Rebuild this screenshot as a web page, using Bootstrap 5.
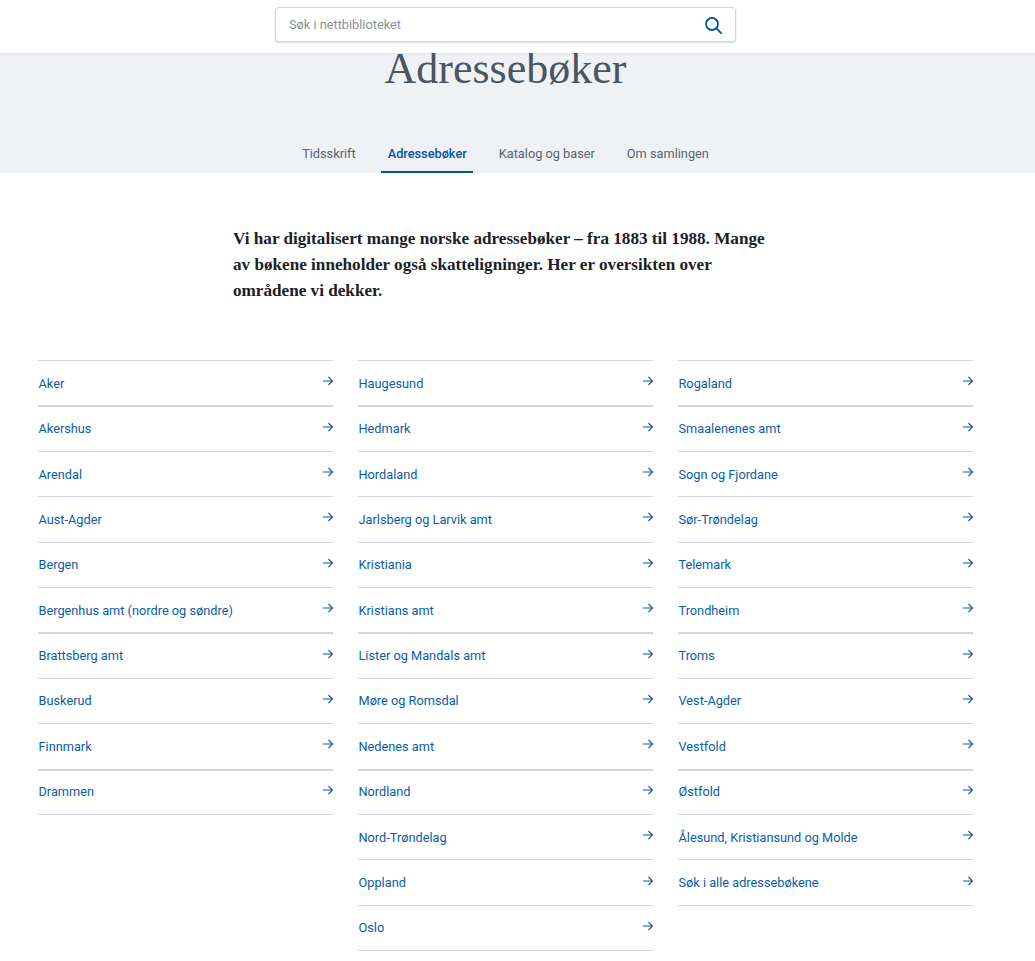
<!DOCTYPE html>
<html lang="no">
<head>
<meta charset="utf-8">
<title>Adressebøker</title>
<link href="https://cdn.jsdelivr.net/npm/bootstrap@5.3.0/dist/css/bootstrap.min.css" rel="stylesheet">
<style>
body{font-family:Roboto,sans-serif;background:#fff;overflow:hidden;}
.top-bar{height:53px;background:#fff;position:relative;z-index:2;box-shadow:0 1px 2px rgba(60,70,90,.08);padding-right:24px;}
.search-box{width:461px;height:35px;border:1px solid #d0d7e0;border-radius:4px;box-shadow:0 1px 2px rgba(40,60,90,.2);padding:0 13px;margin-top:7px;background:#fff;}
.search-box span{font-size:12.75px;color:#8a9096;}
.hero{background:#eff1f5;height:120px;padding-right:24px;}
.hero h1{font-family:"Liberation Serif",serif;font-size:44px;line-height:1;font-weight:400;color:#4a5560;margin:0;margin-top:-6px;text-align:center;}
.tabs{gap:19px;}
.tabs a{display:block;padding:1px 6.5px 0;height:40px;line-height:40px;font-size:12.75px;color:#5a636c;text-decoration:none;}
.tabs a.on{color:#00569f;font-weight:500;border-bottom:2px solid #00569f;}
.intro{width:540px;margin:53px 0 0 233px;font-family:"Liberation Serif",serif;font-weight:700;font-size:17.15px;line-height:26px;color:#1c2126;}
.cols{padding-left:38px;width:973px;gap:25px;margin-top:56px;}
.col-list{width:295px;}
.row-link{height:45.4px;border-top:1px solid #d2d8e2;color:#0a5ca6;font-size:12.75px;text-decoration:none;padding:.2px 0 0 .5px;}
.row-link:last-child{height:46.4px;border-bottom:1px solid #d2d8e2;}
.row-link.heavy{border-top-width:2px;border-top-color:#d0d6e0;padding-bottom:1px;}
.row-link svg{margin-top:-4px;}
</style>
</head>
<body>
<div class="top-bar d-flex justify-content-center">
  <div class="search-box d-flex align-items-center justify-content-between">
    <span>Søk i nettbiblioteket</span>
    <svg width="18" height="18" viewBox="0 0 18 18" fill="none" stroke="#00569f" stroke-width="1.8" stroke-linecap="round"><circle cx="8" cy="8" r="6"/><path d="M12.4 12.4 17 17"/></svg>
  </div>
</div>
<div class="hero d-flex flex-column justify-content-between">
  <h1>Adressebøker</h1>
  <nav class="tabs d-flex justify-content-center">
    <a href="#">Tidsskrift</a>
    <a href="#" class="on">Adressebøker</a>
    <a href="#">Katalog og baser</a>
    <a href="#">Om samlingen</a>
  </nav>
</div>
<p class="intro">Vi har digitalisert mange norske adressebøker – fra 1883 til 1988. Mange av bøkene inneholder også skatteligninger. Her er oversikten over områdene vi dekker.</p>
<svg width="0" height="0" class="position-absolute"><symbol id="arr" viewBox="0 0 10 10"><path d="M0 5h9.5M5.5 1l4 4-4 4" fill="none" stroke="#0a5ca6" stroke-width="1.1"/></symbol></svg>
<div class="cols d-flex align-items-start">
  <div class="col-list d-flex flex-column" id="c1"></div>
  <div class="col-list d-flex flex-column" id="c2"></div>
  <div class="col-list d-flex flex-column" id="c3"></div>
</div>
<script>
const data={c1:["Aker","Akershus","Arendal","Aust-Agder","Bergen","Bergenhus amt (nordre og søndre)","Brattsberg amt","Buskerud","Finnmark","Drammen"],
c2:["Haugesund","Hedmark","Hordaland","Jarlsberg og Larvik amt","Kristiania","Kristians amt","Lister og Mandals amt","Møre og Romsdal","Nedenes amt","Nordland","Nord-Trøndelag","Oppland","Oslo"],
c3:["Rogaland","Smaalenenes amt","Sogn og Fjordane","Sør-Trøndelag","Telemark","Trondheim","Troms","Vest-Agder","Vestfold","Østfold","Ålesund, Kristiansund og Molde","Søk i alle adressebøkene"]};
const heavy=[1,6,9];
for(const k in data){document.getElementById(k).innerHTML=data[k].map((t,i)=>`<a href="#" class="row-link${heavy.includes(i)?' heavy':''} d-flex align-items-center justify-content-between"><span>${t}</span><svg width="10" height="10"><use href="#arr"/></svg></a>`).join('');}
</script>
<script src="https://cdn.jsdelivr.net/npm/bootstrap@5.3.0/dist/js/bootstrap.bundle.min.js"></script>
</body>
</html>
